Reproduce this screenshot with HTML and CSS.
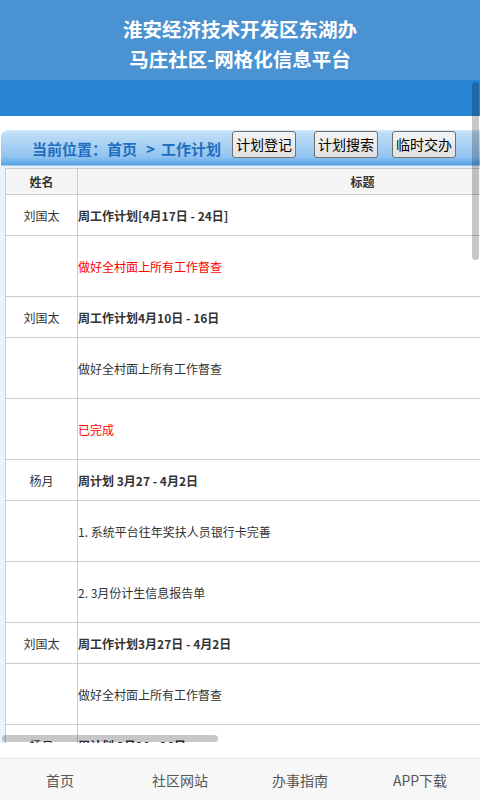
FILE: index.html
```html
<!DOCTYPE html>
<html lang="zh-CN">
<head>
<meta charset="utf-8">
<title>工作计划</title>
<link rel="stylesheet" href="styles.css">
</head>
<body>
<header class="site-header">
  <h1 class="site-title">淮安经济技术开发区东湖办<br>马庄社区-网格化信息平台</h1>
</header>
<main class="main">
  <div class="scroller">
    <div class="nav-bar"></div>
    <div class="crumb-bar">
      <span class="crumb">当前位置：首页<span class="sep">&gt;</span>工作计划</span>
      <button class="btn">计划登记</button>
      <button class="btn">计划搜索</button>
      <button class="btn">临时交办</button>
    </div>
    <div class="plan-wrap">
      <table class="plan-table">
        <colgroup><col class="c-name"><col class="c-title"><col></colgroup>
        <thead>
          <tr><th>姓名</th><th>标题</th><th></th></tr>
        </thead>
        <tbody>
          <tr class="row-title"><td class="name">刘国太</td><td class="title">周工作计划[4月17日 - 24日]</td><td></td></tr>
          <tr class="row-body"><td></td><td class="red">做好全村面上所有工作督查</td><td></td></tr>
          <tr class="row-title"><td class="name">刘国太</td><td class="title">周工作计划4月10日 - 16日</td><td></td></tr>
          <tr class="row-body"><td></td><td>做好全村面上所有工作督查</td><td></td></tr>
          <tr class="row-body"><td></td><td class="red">已完成</td><td></td></tr>
          <tr class="row-title"><td class="name">杨月</td><td class="title">周计划 3月27 - 4月2日</td><td></td></tr>
          <tr class="row-body"><td></td><td>1. 系统平台往年奖扶人员银行卡完善</td><td></td></tr>
          <tr class="row-body"><td></td><td>2. 3月份计生信息报告单</td><td></td></tr>
          <tr class="row-title"><td class="name">刘国太</td><td class="title">周工作计划3月27日 - 4月2日</td><td></td></tr>
          <tr class="row-body"><td></td><td>做好全村面上所有工作督查</td><td></td></tr>
          <tr class="row-title"><td class="name">杨月</td><td class="title">周计划 3月20 - 26日</td><td></td></tr>
        </tbody>
      </table>
    </div>
  </div>
  <div class="thumb thumb-v"></div>
  <div class="thumb thumb-h"></div>
</main>
<footer class="tab-bar">
  <a class="tab">首页</a>
  <a class="tab">社区网站</a>
  <a class="tab">办事指南</a>
  <a class="tab">APP下载</a>
</footer>
</body>
</html>
```

FILE: styles.css
```css
* { box-sizing: border-box; }
html, body { margin: 0; padding: 0; }
body {
  height: 800px;
  display: flex;
  flex-direction: column;
  background: #fff;
  font-family: "Noto Sans CJK SC", "Microsoft YaHei", sans-serif;
  color: #333;
  overflow: hidden;
}
.site-header {
  height: 80px;
  flex: none;
  padding-top: 7px;
  background: #4a92d1;
  display: flex;
  align-items: center;
  justify-content: center;
}
.site-title {
  margin: 0;
  color: #fff;
  font-size: 19.5px;
  font-weight: bold;
  line-height: 30px;
  text-align: center;
}
.main {
  flex: 1;
  min-height: 0;
  margin-bottom: 15px;
  position: relative;
}
.scroller {
  height: 100%;
  overflow: auto;
  scrollbar-width: none;
}
.thumb {
  position: absolute;
  background: rgba(0, 0, 0, 0.22);
  border-radius: 4px;
}
.thumb-v { top: 2px; right: 1px; width: 7px; height: 178px; }
.thumb-h { left: 2px; bottom: 1px; width: 216px; height: 7px; }
.nav-bar {
  height: 36px;
  background: #2884d4;
}
.crumb-bar {
  margin: 14px 0 0 1px;
  height: 36px;
  display: flex;
  align-items: flex-start;
  border-radius: 7px 0 0 0;
  background: linear-gradient(to bottom, #d4eafb 0, #bcdcf6 10%, #a8d0f3 45%, #8fc3f0 75%, #63aae8 92%, #5aa4e6 97%, #cfe5f8 100%);
}
.crumb {
  margin-left: 31px;
  line-height: 38px;
  font-size: 15px;
  font-weight: bold;
  color: #1f6ec0;
  white-space: nowrap;
}
.sep { margin: 0 6px 0 9px; }
.btn {
  margin: 1px 0 0 11px;
  height: 27px;
  padding: 0 3px;
  border: 1px solid #6f6f6f;
  border-radius: 3px;
  background: linear-gradient(to bottom, #f4f4f4, #e2e2e2);
  font-family: "Noto Sans CJK SC", sans-serif;
  font-size: 14px;
  color: #000;
  line-height: 25px;
  white-space: nowrap;
}
.btn:nth-of-type(2) { margin-left: 18px; }
.btn:nth-of-type(3) { margin-left: 14px; }
.plan-wrap {
  width: max-content;
  min-height: 2294px;
  padding: 2px 0 0 5px;
  background: #eaf3fc;
}
.plan-table {
  width: 1017px;
  table-layout: fixed;
  border-collapse: collapse;
  background: #fff;
  font-size: 12px;
}
.c-name { width: 72px; }
.c-title { width: 570px; }
.plan-table th,
.plan-table td {
  border: 1px solid #cccccc;
  padding: 0;
  white-space: nowrap;
}
.plan-table th {
  height: 26px;
  background: #f5f5f5;
  font-weight: bold;
  text-align: center;
}
.row-title td { height: 41px; }
.row-body td { height: 61px; }
.name { text-align: center; }
.title { font-weight: bold; }
.red { color: #ff0000; }
.tab-bar {
  height: 42px;
  flex: none;
  display: flex;
  border-top: 1px solid #e8e8e8;
  background: #f7f7f7;
}
.tab {
  flex: 1;
  display: flex;
  align-items: center;
  justify-content: center;
  font-size: 14px;
  color: #555;
}
```
